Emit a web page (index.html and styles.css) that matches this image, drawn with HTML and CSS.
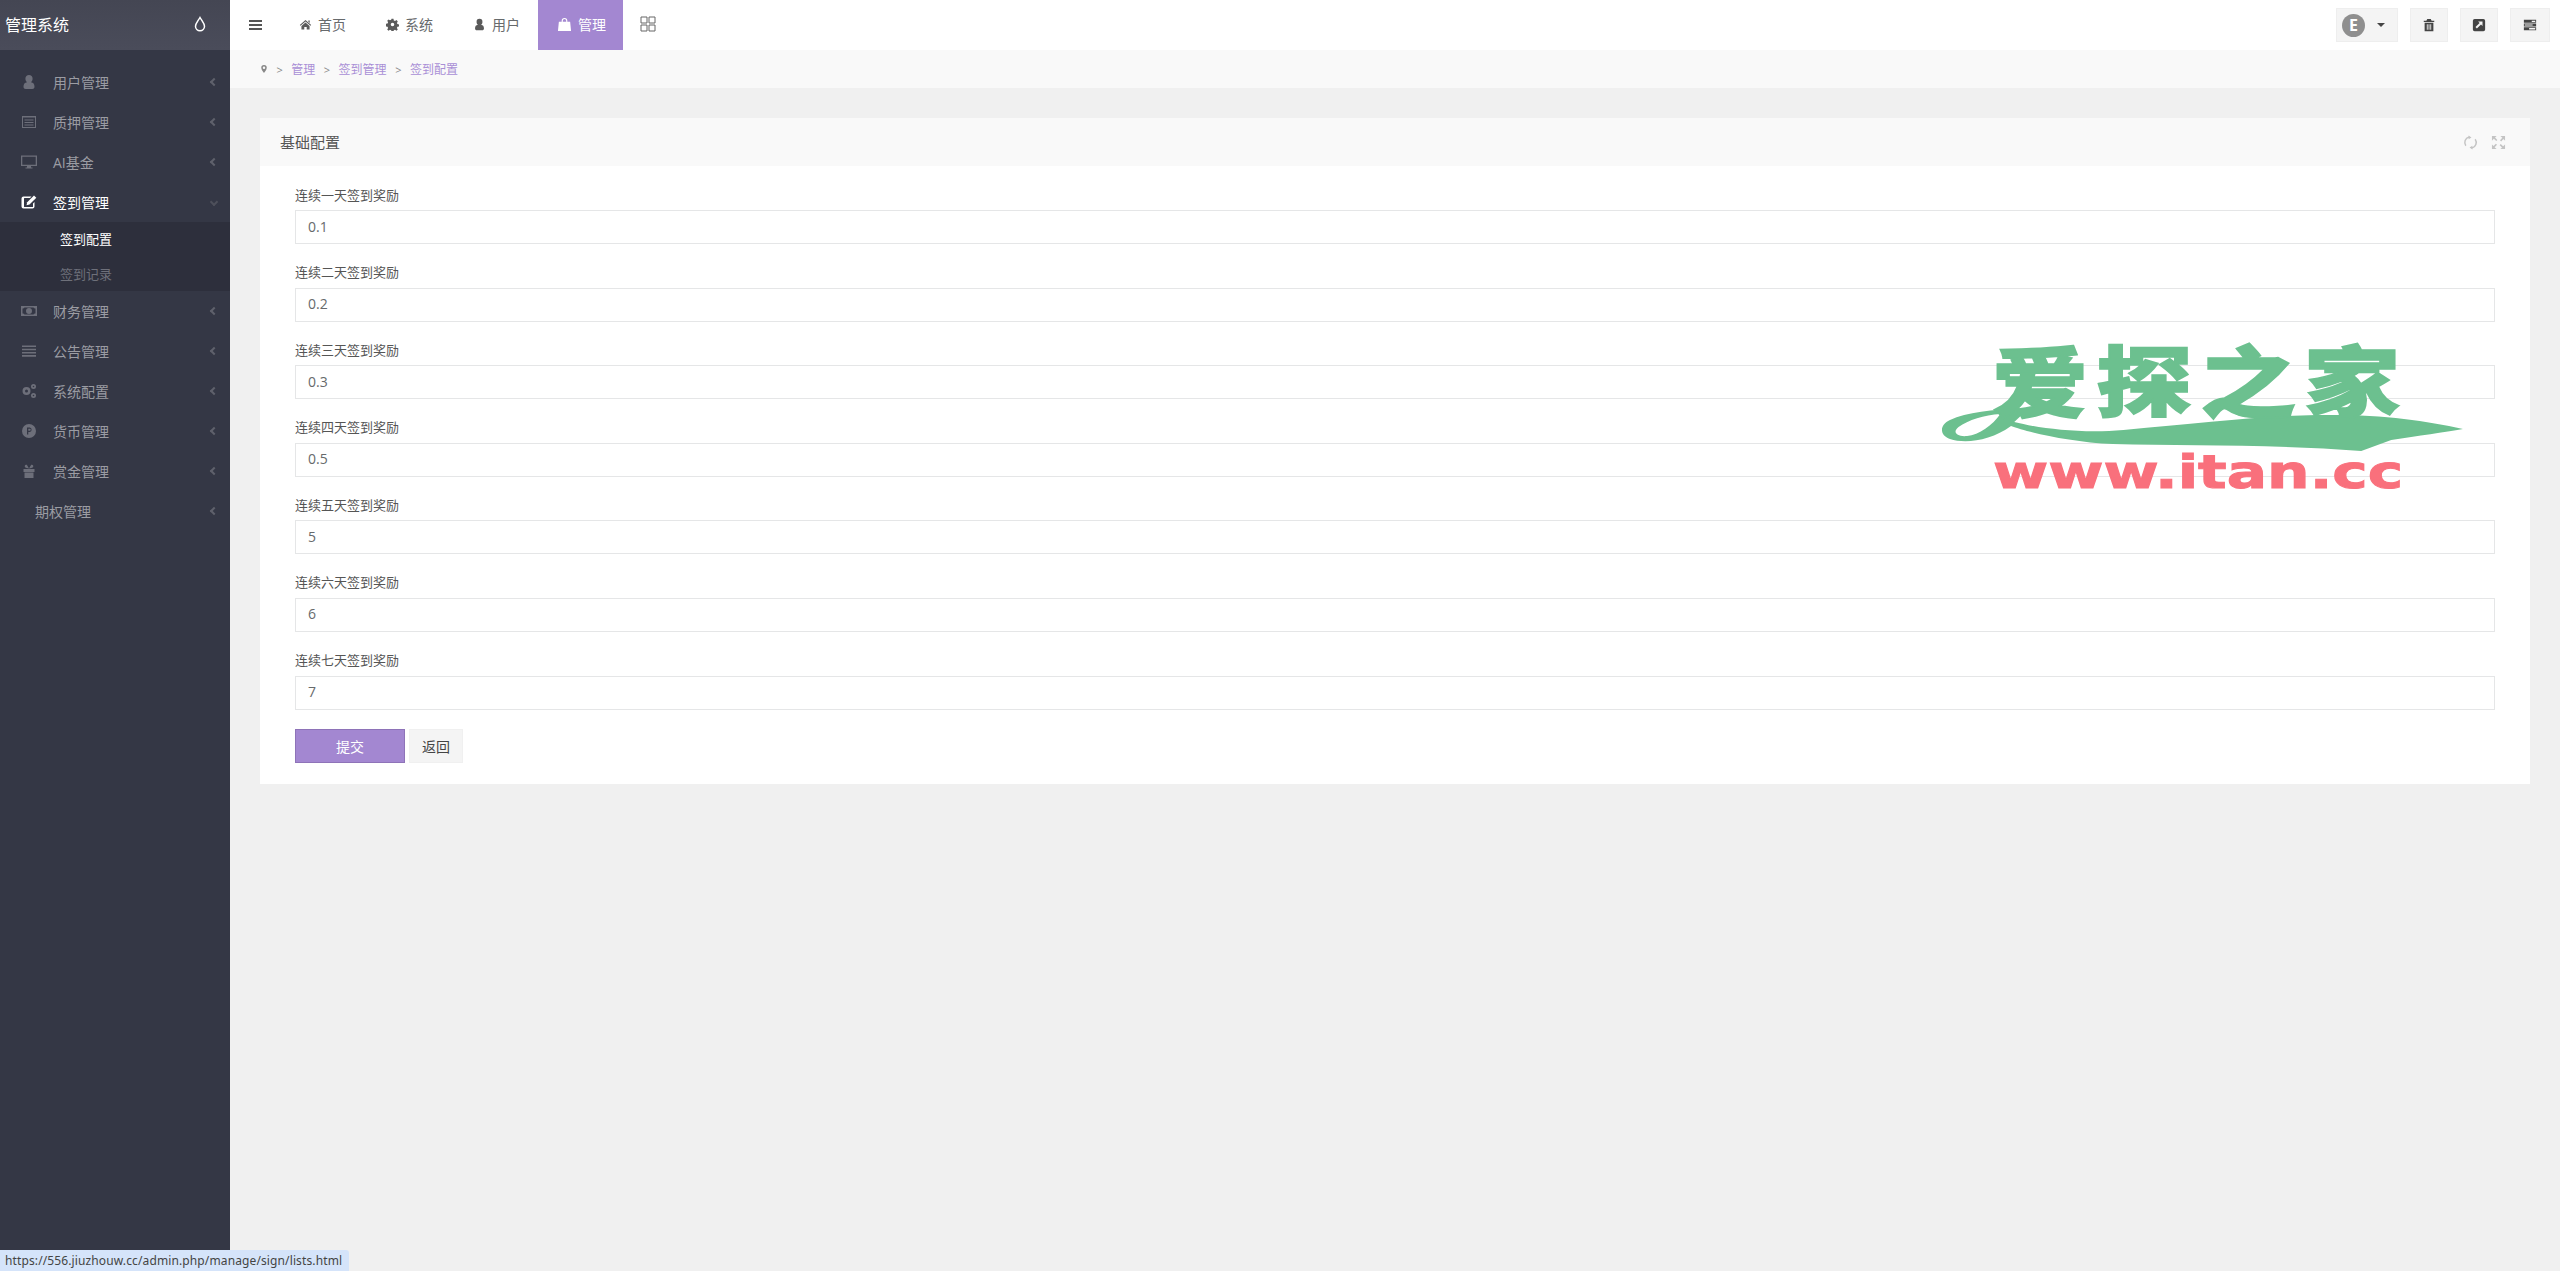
FILE: index.html
```html
<!DOCTYPE html>
<html lang="en">
<head>
    <meta charset="UTF-8">
    <title>管理系统</title>
    <link rel="stylesheet" href="styles.css">
</head>
<body>
    <svg class="icon-defs" width="0" height="0">
        <defs>
            <symbol id="i-user" viewBox="0 0 16 16"><path d="M8 1a3.600 3.600 0 0 1 3.600 3.800c0 1.500-.7 2.800-1.600 3.500 2.300.4 3.500 1.700 3.500 4.500 0 1.500-.9 2.200-2.200 2.200H4.700c-1.300 0-2.200-.7-2.200-2.200 0-2.800 1.200-4.100 3.500-4.500-.9-.7-1.600-2-1.600-3.500A3.600 3.600 0 0 1 8 1z"/></symbol>
            <symbol id="i-card" viewBox="0 0 16 16"><path fill-rule="evenodd" d="M1 2h14v12H1zM2 3.500v9.500h12V3.500zM3.500 5.500h9v1h-9zM3.500 8h9v1h-9zM3.500 10.500h9v1h-9z"/></symbol>
            <symbol id="i-desktop" viewBox="0 0 16 16"><path fill-rule="evenodd" d="M0 1.500h16v10.500H10v1.500h1.500v1h-7v-1H6V12H0zM1.300 2.800v7.900h13.400V2.800z"/></symbol>
            <symbol id="i-edit" viewBox="0 0 16 16"><path d="M2.500 2.500h8l-1.500 1.500H3.500a.5.5 0 0 0-.5.500v8a.5.5 0 0 0 .5.500h8a.5.5 0 0 0 .5-.5V9.500L13.500 8v4.500a2 2 0 0 1-2 2h-9a2 2 0 0 1-2-2v-8a2 2 0 0 1 2-2z"/><path d="M13 1.500l2.300 2.300-6.800 6.800-3 .7.700-3z"/></symbol>
            <symbol id="i-money" viewBox="0 0 16 16"><path fill-rule="evenodd" d="M0 3h16v10H0zM1.500 5.500v5a2 2 0 0 1 2 1h9a2 2 0 0 1 2-1v-5a2 2 0 0 1-2-1h-9a2 2 0 0 1-2 1zM8 5a3 3 0 1 1 0 6 3 3 0 0 1 0-6z"/></symbol>
            <symbol id="i-list" viewBox="0 0 16 16"><path d="M1 2.500h14v1.600H1zM1 5.700h14v1.600H1zM1 8.900h14v1.600H1zM1 12.100h14v1.600H1z"/></symbol>
            <symbol id="i-cogs" viewBox="0 0 16 16"><path fill-rule="evenodd" d="M5.500 4a4 4 0 1 1 0 8 4 4 0 0 1 0-8zM5.500 6.500a1.500 1.500 0 1 0 0 3 1.500 1.500 0 0 0 0-3zM12.500 1a2.500 2.500 0 1 1 0 5 2.500 2.500 0 0 1 0-5zM12.500 2.700a.8.8 0 1 0 0 1.600.8.8 0 0 0 0-1.600zM12.500 10a2.500 2.500 0 1 1 0 5 2.500 2.500 0 0 1 0-5zM12.500 11.700a.8.8 0 1 0 0 1.600.8.8 0 0 0 0-1.600z"/></symbol>
            <symbol id="i-coin" viewBox="0 0 16 16"><path fill-rule="evenodd" d="M8 1a7 7 0 1 1 0 14A7 7 0 0 1 8 1zM6 4.500v7h1.300V9h1.500a2.300 2.300 0 0 0 0-4.500zM7.300 5.700h1.400a1 1 0 0 1 0 2.100H7.300z"/></symbol>
            <symbol id="i-gift" viewBox="0 0 16 16"><path d="M2.500 6h11v3h-11zM3.500 9.600h9V15h-9zM8 5.500 4.800 4.800a1.500 1.500 0 0 1 1-3zM8 5.500l2.200-3.700a1.500 1.500 0 0 1 1 3z"/></symbol>
            <symbol id="i-home" viewBox="0 0 16 16"><path d="M8 2.500 15 8.500l-.8.900L8 4.200 1.800 9.400 1 8.500zM3 9.700 8 5.500l5 4.200v4.300H9.500v-3h-3v3H3zM11.500 3h1.700v3l-1.700-1.500z"/></symbol>
            <symbol id="i-gear" viewBox="0 0 16 16"><path fill-rule="evenodd" d="M6.800 1h2.400l.4 2 1.500.7 1.800-1.100 1.600 1.600-1.100 1.800.7 1.500 2 .4v2.400l-2 .4-.7 1.500 1.100 1.800-1.600 1.600-1.800-1.100-1.500.7-.4 2H6.800l-.4-2-1.500-.7-1.800 1.100-1.600-1.600 1.100-1.800-.7-1.500-2-.4V7.100l2-.4.7-1.500-1.100-1.800 1.600-1.600 1.800 1.100 1.500-.7zM8 5.800a2.200 2.200 0 1 0 0 4.400 2.200 2.200 0 0 0 0-4.400z"/></symbol>
            <symbol id="i-bag" viewBox="0 0 16 16"><path fill-rule="evenodd" d="M5 5V4a3 3 0 0 1 6 0v1h3l1 10H1L2 5zM6.200 5h3.600V4a1.800 1.800 0 0 0-3.600 0z"/></symbol>
            <symbol id="i-pin" viewBox="0 0 16 16"><path fill-rule="evenodd" d="M8 0a5.500 5.500 0 0 1 5.500 5.500C13.500 9 9.500 14 8 16 6.500 14 2.500 9 2.500 5.500A5.500 5.500 0 0 1 8 0zM8 3a2.500 2.500 0 1 0 0 5 2.500 2.500 0 0 0 0-5z"/></symbol>
            <symbol id="i-trash" viewBox="0 0 16 16"><path fill-rule="evenodd" d="M6 1h4l1 2h3v1.500H2V3h3zM3 5.500h10V15H3zM5.500 7v6.500h1V7zM7.500 7v6.500h1V7zM9.500 7v6.500h1V7z"/></symbol>
            <symbol id="i-open" viewBox="0 0 16 16"><path fill-rule="evenodd" d="M3 1h10a2 2 0 0 1 2 2v10a2 2 0 0 1-2 2H3a2 2 0 0 1-2-2V3a2 2 0 0 1 2-2zM7 4l1.700 1.700L4 10.400 5.600 12l4.700-4.700L12 9V4z"/></symbol>
            <symbol id="i-tasks" viewBox="0 0 16 16"><path fill-rule="evenodd" d="M1 2h14v3.500H1zM10 3v1.500h4V3zM1 6.300h14v3.400H1zM1 10.500h14V14H1zM2 7.300v1.400h9V7.300zM7 11.500V13h7v-1.500z"/></symbol>
        </defs>
    </svg>

    <div class="layout">
        <aside class="sidebar">
            <div class="brand">
                <span>管理系统</span>
                <svg class="drop" viewBox="0 0 12 16"><path d="M6 1.500C4 5 1.500 7.500 1.500 10.300a4.500 4.500 0 0 0 9 0C10.500 7.500 8 5 6 1.500z"/></svg>
            </div>
            <ul class="menu">
                <li class="menu-item"><svg class="menu-icon"><use href="#i-user"/></svg><span class="menu-text">用户管理</span><i class="caret-left"></i></li>
                <li class="menu-item"><svg class="menu-icon"><use href="#i-card"/></svg><span class="menu-text">质押管理</span><i class="caret-left"></i></li>
                <li class="menu-item"><svg class="menu-icon"><use href="#i-desktop"/></svg><span class="menu-text">AI基金</span><i class="caret-left"></i></li>
                <li class="menu-item open"><svg class="menu-icon"><use href="#i-edit"/></svg><span class="menu-text">签到管理</span><i class="caret-down"></i></li>
                <li class="submenu">
                    <a class="current">签到配置</a>
                    <a>签到记录</a>
                </li>
                <li class="menu-item"><svg class="menu-icon"><use href="#i-money"/></svg><span class="menu-text">财务管理</span><i class="caret-left"></i></li>
                <li class="menu-item"><svg class="menu-icon"><use href="#i-list"/></svg><span class="menu-text">公告管理</span><i class="caret-left"></i></li>
                <li class="menu-item"><svg class="menu-icon"><use href="#i-cogs"/></svg><span class="menu-text">系统配置</span><i class="caret-left"></i></li>
                <li class="menu-item"><svg class="menu-icon"><use href="#i-coin"/></svg><span class="menu-text">货币管理</span><i class="caret-left"></i></li>
                <li class="menu-item"><svg class="menu-icon"><use href="#i-gift"/></svg><span class="menu-text">赏金管理</span><i class="caret-left"></i></li>
                <li class="menu-item no-icon"><span class="menu-text">期权管理</span><i class="caret-left"></i></li>
            </ul>
        </aside>

        <main class="main">
            <header class="topbar">
                <div class="burger"><span></span><span></span><span></span></div>
                <nav class="topnav">
                    <a><svg class="nav-icon"><use href="#i-home"/></svg>首页</a>
                    <a><svg class="nav-icon"><use href="#i-gear"/></svg>系统</a>
                    <a><svg class="nav-icon"><use href="#i-user"/></svg>用户</a>
                    <a class="active"><svg class="nav-icon"><use href="#i-bag"/></svg>管理</a>
                </nav>
                <svg class="grid-icon" viewBox="0 0 16 16"><path d="M1 1h6v6H1zM9 1h6v6H9zM1 9h6v6H1zM9 9h6v6H9z"/></svg>
                <div class="tools">
                    <button class="tool tool-lang"><span class="lang-badge">E</span><i class="caret-solid"></i></button>
                    <button class="tool"><svg class="tool-icon"><use href="#i-trash"/></svg></button>
                    <button class="tool"><svg class="tool-icon"><use href="#i-open"/></svg></button>
                    <button class="tool"><svg class="tool-icon"><use href="#i-tasks"/></svg></button>
                </div>
            </header>

            <div class="crumbs">
                <svg class="pin"><use href="#i-pin"/></svg>
                <span class="sep">&gt;</span><a>管理</a>
                <span class="sep">&gt;</span><a>签到管理</a>
                <span class="sep">&gt;</span><a>签到配置</a>
            </div>

            <section class="panel">
                <div class="panel-head">
                    <h5>基础配置</h5>
                    <div class="panel-tools">
                        <svg class="refresh" viewBox="0 0 16 16"><path d="M3 11.500A6 6 0 0 1 6.500 2.200M13 4.500A6 6 0 0 1 9.500 13.800"/><path class="arrow-head" d="M6 .5 9 2.700 6 4.500zM10 15.500 7 13.300 10 11.500z"/></svg>
                        <svg viewBox="0 0 16 16"><path d="M1 1h5L4.300 2.700 6.800 5.200 5.600 6.400 3 3.900 1 6zM15 1v5l-1.700-1.700-2.500 2.500-1.200-1.200L12.100 3 10 1zM1 15v-5l1.700 1.700 2.500-2.500 1.200 1.200L3.900 13 6 15zM15 15h-5l1.700-1.700-2.500-2.500 1.200-1.200 2.500 2.500L15 10z"/></svg>
                    </div>
                </div>
                <form class="panel-body">
                    <div class="field"><label>连续一天签到奖励</label><input type="text" value="0.1"></div>
                    <div class="field"><label>连续二天签到奖励</label><input type="text" value="0.2"></div>
                    <div class="field"><label>连续三天签到奖励</label><input type="text" value="0.3"></div>
                    <div class="field"><label>连续四天签到奖励</label><input type="text" value="0.5"></div>
                    <div class="field"><label>连续五天签到奖励</label><input type="text" value="5"></div>
                    <div class="field"><label>连续六天签到奖励</label><input type="text" value="6"></div>
                    <div class="field"><label>连续七天签到奖励</label><input type="text" value="7"></div>
                    <div class="actions">
                        <button type="button" class="btn-submit">提交</button>
                        <button type="button" class="btn-back">返回</button>
                    </div>
                </form>
            </section>
        </main>
    </div>

    <!-- watermark sits over the form -->
    <div class="watermark">
        <svg class="swoosh" viewBox="0 0 560 170"><path fill-rule="evenodd" transform="scale(1.071 1)" d="M100 79C75 78 45 82 28 90C18 95 18 105 28 109C42 114 66 111 85 96C100 102 140 112 180 114C250 116 330 114 412 121L440 110C465 106 490 102 507 99C470 90 430 84 370 85C320 86 260 93 190 100C150 104 110 98 88 92C92 88 96 84 100 79zM75 84C60 85 45 90 36 97C30 102 34 107 44 106C55 105 68 95 75 84z"/></svg>
        <div class="wm-title">爱探之家</div>
        <div class="wm-url">www.itan.cc</div>
    </div>

    <div class="statusbar">https://556.jiuzhouw.cc/admin.php/manage/sign/lists.html</div>
</body>
</html>
```

FILE: styles.css
```css
* {
    box-sizing: border-box;
}

html, body {
    margin: 0;
    height: 100%;
    overflow: hidden;
    background-color: #f0f0f0;
    color: #676a6c;
    font-family: "Open Sans", "Noto Sans CJK SC", sans-serif;
    font-size: 13px;
}

.icon-defs {
    display: block;
    height: 0;
}

.layout {
    display: flex;
    height: 100vh;
}

/* Left menu */
.sidebar {
    flex: 0 0 230px;
    background-color: #343745;
    color: #9b9ca3;
}

.brand {
    display: flex;
    align-items: center;
    justify-content: space-between;
    height: 50px;
    padding: 0 24px 2px 5px;
    background: linear-gradient(#444653, #4a4c5a);
    color: #fff;
    font-size: 16px;
}

.drop {
    width: 12px;
    height: 16px;
    fill: none;
    stroke: #fff;
    stroke-width: 1.5;
}

.menu {
    list-style: none;
    margin: 0;
    padding: 12px 0 0;
}

.menu-item {
    display: flex;
    align-items: center;
    height: 40px;
    padding: 0 13px 0 21px;
    font-size: 14px;
}

.menu-icon {
    flex: 0 0 16px;
    width: 16px;
    height: 16px;
    margin-right: 16px;
    fill: #6d6f7a;
}

.menu-text {
    flex: 1;
}

.no-icon {
    padding-left: 35px;
}

.menu-item.open {
    color: #fff;
}

.menu-item.open .menu-icon {
    fill: #fff;
}

.caret-left, .caret-down {
    display: block;
    width: 6px;
    height: 6px;
    border-left: 2px solid #5f616c;
    border-bottom: 2px solid #5f616c;
}

.caret-left {
    transform: rotate(45deg);
}

.caret-down {
    transform: rotate(-45deg);
    border-color: #4e505b;
}

.submenu {
    display: flex;
    flex-direction: column;
    height: 69px;
    background-color: #2d2f3c;
}

.submenu a {
    display: block;
    height: 35px;
    line-height: 35px;
    padding-left: 60px;
    color: #6e707a;
}

.submenu a.current {
    color: #fff;
}

/* Main column */
.main {
    flex: 1;
    min-width: 0;
}

.topbar {
    display: flex;
    align-items: center;
    height: 50px;
    padding-left: 19px;
    background-color: #fff;
}

.burger {
    display: flex;
    flex-direction: column;
    gap: 2px;
    width: 13px;
    margin-right: 24px;
}

.burger span {
    display: block;
    height: 2px;
    background-color: #555;
}

.topnav {
    display: flex;
    height: 50px;
}

.topnav a {
    display: flex;
    align-items: center;
    padding: 0 13px 2px;
    margin-right: 12px;
    font-size: 14px;
    color: #676a6c;
}

.topnav a:nth-child(1) {
    margin-right: 14px;
}

.topnav a:nth-child(2) {
    margin-right: 14px;
}

.topnav a:nth-child(3) {
    margin-right: 6px;
}

.topnav a.active {
    width: 85px;
    margin: 0 0 0 -1px;
    padding: 0 0 2px 19px;
    background-color: #a387d1;
    color: #fff;
}

.nav-icon {
    width: 13px;
    height: 13px;
    margin-right: 6px;
    fill: #5a5a5a;
}

.active .nav-icon {
    width: 15px;
    height: 15px;
    fill: #fff;
}

.grid-icon {
    width: 16px;
    height: 16px;
    margin-left: 17px;
    margin-bottom: 2px;
    fill: none;
    stroke: #666;
    stroke-width: 1;
}

.tools {
    display: flex;
    gap: 12px;
    margin-left: auto;
    padding-right: 10px;
}

.tool {
    display: flex;
    align-items: center;
    justify-content: center;
    width: 38px;
    height: 34px;
    padding: 0;
    border: 1px solid #eee;
    background-color: #f4f4f4;
}

.tool:last-child {
    width: 40px;
}

.tool-lang {
    justify-content: flex-start;
    width: 62px;
    padding-left: 5px;
}

.lang-badge {
    width: 23px;
    height: 23px;
    border-radius: 50%;
    background-color: #8f8f8f;
    color: #fff;
    font: bold 16px/23px "Open Sans", sans-serif;
    text-align: center;
}

.caret-solid {
    margin-left: 12px;
    border-top: 4px solid #444;
    border-left: 4px solid transparent;
    border-right: 4px solid transparent;
}

.tool-icon {
    width: 14px;
    height: 14px;
    fill: #444;
}

.crumbs {
    display: flex;
    align-items: center;
    height: 38px;
    padding-left: 30px;
    background-color: #f9f9f9;
    font-size: 12px;
}

.crumbs a {
    color: #a98fd6;
}

.pin {
    width: 8px;
    height: 10px;
    fill: #888;
}

.sep {
    margin: 0 8.5px;
    color: #888;
    font-size: 11px;
}

/* Form card */
.panel {
    margin: 30px 30px 0;
    background-color: #fff;
}

.panel-head {
    display: flex;
    align-items: center;
    justify-content: space-between;
    height: 48px;
    padding: 0 24px 0 20px;
    background-color: #f9f9f9;
}

.panel-head h5 {
    margin: 0 0 2px;
    font-size: 15px;
    font-weight: 400;
    color: #555;
}

.panel-tools {
    display: flex;
    gap: 13px;
}

.panel-tools svg {
    width: 15px;
    height: 15px;
    fill: #c4c4c4;
}

.panel-tools .refresh {
    fill: none;
    stroke: #c4c4c4;
    stroke-width: 1.6;
}

.refresh .arrow-head {
    fill: #c4c4c4;
    stroke: none;
}

.panel-body {
    padding: 20px 35px 21px;
}

.field {
    margin-bottom: 19.6px;
}

.field label {
    display: block;
    height: 20px;
    margin-top: -1.5px;
    margin-bottom: 5.5px;
    line-height: 20px;
    font-size: 13px;
    color: #555;
}

.field input {
    display: block;
    width: 100%;
    height: 34px;
    padding: 0 12px 2px;
    border: 1px solid #e5e6e7;
    outline: none;
    color: #676a6c;
    font-family: "Open Sans", sans-serif;
    font-size: 14px;
}

.actions {
    display: flex;
    gap: 4px;
}

.btn-submit, .btn-back {
    height: 34px;
    font-family: "Noto Sans CJK SC", sans-serif;
    font-size: 14px;
    padding: 0;
}

.btn-submit {
    width: 110px;
    border: 1px solid #8e73b8;
    background-color: #a387d1;
    color: #fff;
}

.btn-back {
    width: 54px;
    border: 1px solid #f0f0f0;
    background-color: #f4f4f4;
    color: #444;
}

/* Watermark */
.watermark {
    position: absolute;
    left: 1920px;
    top: 330px;
    width: 560px;
    height: 170px;
}

.swoosh {
    position: absolute;
    left: 0;
    top: 0;
    width: 560px;
    height: 170px;
    fill: #6cc08f;
}

.wm-title {
    position: absolute;
    left: 72px;
    top: 8px;
    color: #6cc08f;
    -webkit-text-stroke: 2px #6cc08f;
    font-family: "Noto Sans CJK SC", sans-serif;
    font-size: 96px;
    font-weight: 900;
    line-height: 100px;
    letter-spacing: 8px;
    white-space: nowrap;
    transform: scaleY(0.8);
    transform-origin: left top;
}

.wm-url {
    position: absolute;
    left: 73px;
    top: 114px;
    color: #f9707c;
    -webkit-text-stroke: 1px #f9707c;
    font-family: "DejaVu Sans", sans-serif;
    font-size: 46px;
    font-weight: 700;
    line-height: 56px;
    white-space: nowrap;
    transform: scaleX(1.3);
    transform-origin: left top;
}

/* Browser link preview, bottom left */
.statusbar {
    position: fixed;
    left: 0;
    bottom: 0;
    width: 349px;
    height: 21px;
    padding-left: 5px;
    border-top-right-radius: 3px;
    background-color: #d5e4fa;
    color: #444;
    font-family: "Noto Sans", sans-serif;
    font-size: 12px;
    letter-spacing: .12px;
    line-height: 21px;
    white-space: nowrap;
}
```
